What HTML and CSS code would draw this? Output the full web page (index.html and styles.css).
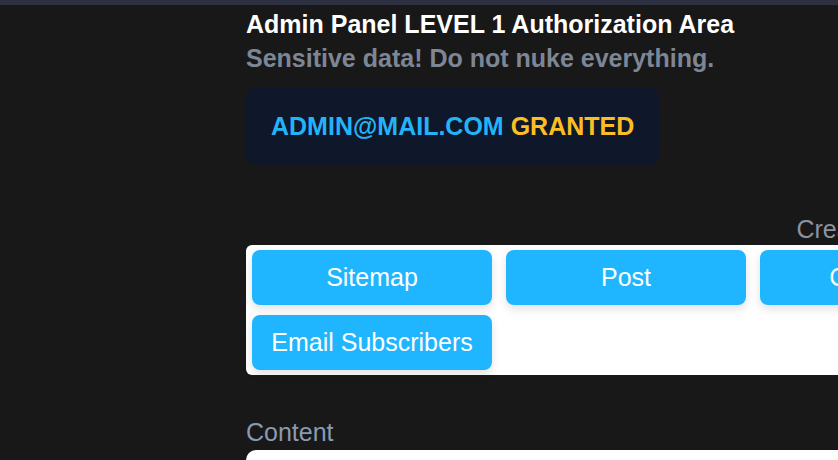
FILE: index.html
```html
<!DOCTYPE html>
<html>
<head>
<meta charset="utf-8">
<link rel="stylesheet" href="styles.css">
</head>
<body>
<div class="topbar"></div>
<main class="main">
  <h1 class="title">Admin Panel LEVEL 1 Authorization Area</h1>
  <p class="subtitle">Sensitive data! Do not nuke everything.</p>
  <div class="badge"><span class="email">ADMIN@MAIL.COM</span> <span class="granted">GRANTED</span></div>
  <section class="create">
    <div class="create-label">Create</div>
    <div class="panel">
      <button class="btn">Sitemap</button>
      <button class="btn">Post</button>
      <button class="btn">Category</button>
      <button class="btn">Tag</button>
      <button class="btn">Email Subscribers</button>
    </div>
  </section>
  <section class="content">
    <div class="content-label">Content</div>
    <div class="content-box"></div>
  </section>
</main>
</body>
</html>
```

FILE: styles.css
```css
html, body {
  margin: 0;
  padding: 0;
}
body {
  background: #181818;
  font-family: "Liberation Sans", Arial, sans-serif;
  overflow: hidden;
  width: 838px;
  height: 460px;
}
.topbar {
  height: 5px;
  background: #2d3041;
}
.main {
  padding-left: 246px;
  width: 1200px;
}
.title {
  margin: 0;
  padding-top: 2px;
  font-size: 25px;
  line-height: 34px;
  font-weight: bold;
  color: #ffffff;
}
.subtitle {
  margin: 0;
  font-size: 25px;
  line-height: 34px;
  font-weight: bold;
  color: #7d8695;
}
.badge {
  display: inline-block;
  margin-top: 12px;
  background: #0f172a;
  border-radius: 10px;
  padding: 25px 25px;
  font-size: 25px;
  line-height: 28px;
  font-weight: bold;
}
.email { color: #23b4f8; }
.granted { color: #fbbf24; }
.create {
  width: 1176px;
  margin-top: 50px;
}
.create-label {
  text-align: center;
  color: #8b93a1;
  font-size: 25px;
  line-height: 29px;
}
.panel {
  margin-top: 1px;
  background: #ffffff;
  border-radius: 6px;
  padding: 5px 6px;
  display: grid;
  grid-template-columns: repeat(4, 240px);
  column-gap: 14px;
  row-gap: 10px;
}
.btn {
  height: 55px;
  border: none;
  border-radius: 8px;
  background: #20b6ff;
  color: #ffffff;
  font-family: "Liberation Sans", Arial, sans-serif;
  font-size: 25px;
  box-shadow: 0 4px 10px rgba(0, 0, 0, 0.12);
  padding: 0;
}
.content {
  margin-top: 43px;
}
.content-label {
  color: #8a9ab0;
  font-size: 25px;
  line-height: 29px;
}
.content-box {
  margin-top: 3px;
  height: 200px;
  width: 1176px;
  background: #ffffff;
  border-radius: 10px;
}
```
